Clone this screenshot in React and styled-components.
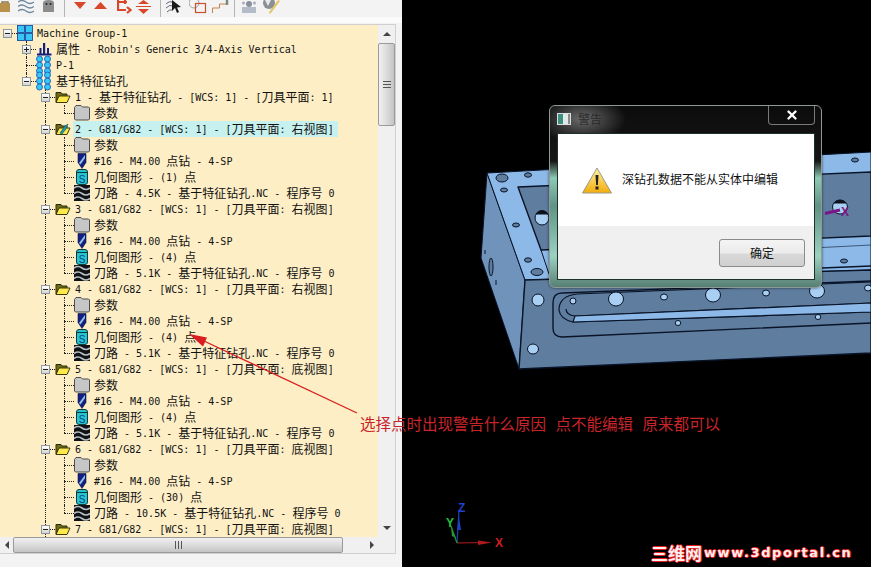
import React from 'react'
import styled, { createGlobalStyle } from 'styled-components'
import { X } from 'lucide-react'

const op = (n, name) => ({ d: 2, icon: 'open', box: 'minus', text: `${n} - G81/G82 - [WCS: 1] - [刀具平面: ${name}]` })

const children = (hole, len, nc = '基于特征钻孔') => ([
    { d: 3, icon: 'folder', text: '参数' },
    { d: 3, icon: 'tool', text: '#16 - M4.00 点钻 - 4-SP' },
    { d: 3, icon: 'geom', text: `几何图形 - (${hole}) 点` },
    { d: 3, icon: 'path', text: `刀路 - ${len}K - ${nc}.NC - 程序号 0` },
])

const rows = [
    { d: 0, icon: 'group', text: 'Machine Group-1', box: 'minus' },
    { d: 1, icon: 'chart', text: "属性 - Robin's Generic 3/4-Axis Vertical", box: 'plus' },
    { d: 1, icon: 'dots', text: 'P-1' },
    { d: 1, icon: 'dots', text: '基于特征钻孔', box: 'minus' },
    { d: 2, icon: 'open', text: '1 - 基于特征钻孔 - [WCS: 1] - [刀具平面: 1]', box: 'minus' },
    { d: 3, icon: 'folder', text: '参数' },
    { d: 2, icon: 'openCheck', text: '2 - G81/G82 - [WCS: 1] - [刀具平面: 右视图]', box: 'minus', hl: true },
    ...children(1, '4.5'),
    op(3, '右视图'),
    ...children(4, '5.1'),
    op(4, '右视图'),
    ...children(4, '5.1'),
    op(5, '底视图'),
    ...children(4, '5.1'),
    op(6, '底视图'),
    ...children(30, '10.5'),
    op(7, '底视图'),
]

// column 2 keeps running past the last visible row, the list is scrolled
const hasNext = (i, c) => {
    for (let j = i + 1; j < rows.length; j++) {
        if (rows[j].d < c) return false
        if (rows[j].d === c) return true
    }
    return c === 2
}

function Mixed({ text }) {
    return text.split(/([\u4e00-\u9fff]+)/).map((part, i) =>
        /[\u4e00-\u9fff]/.test(part)
            ? <Han key={i}>{part}</Han>
            : <Lat key={i}>{part}</Lat>
    )
}

const OpenFolder = ({ check }) => (
    <svg width="16" height="16" viewBox="0 0 16 16">
        <path d="M1 3.5h5l1 1.5h5v3H3.5L1 13z" fill="#6e6a1c" stroke="#2e2c08" />
        <path d="M1 13.5 4 7h11l-3 6.5z" fill="#ffe84a" stroke="#3a3a10" />
        {check && <path d="M5 12 10 5l3-2-2 5-4 5z" fill="#1f9aa8" stroke="#12506a" strokeWidth=".6" />}
    </svg>
)

const icons = {
    group: (
        <svg width="16" height="16" viewBox="0 0 16 16">
            {[[0.5, 0.5], [8.5, 0.5], [0.5, 8.5], [8.5, 8.5]].map(([x, y]) =>
                <rect key={x + '' + y} x={x} y={y} width="7" height="7" fill="#38c6f6" stroke="#1b4f9e" strokeWidth=".9" />
            )}
        </svg>
    ),
    chart: (
        <svg width="16" height="16" viewBox="0 0 16 16">
            <path d="M1 13.5h14.5" stroke="#14207e" strokeWidth="2" />
            <path d="M3.5 7h2v6h-2zM7 2h2.2v11H7zM11 7h2v6h-2z" fill="#14207e" />
        </svg>
    ),
    dots: (
        <svg width="16" height="16" viewBox="0 0 16 16" style={{ overflow: 'visible' }}>
            {[-0.5, 5.5, 11.5].map(y => [3.5, 11.5].map(x =>
                <circle key={x + '-' + y} cx={x} cy={y + 2.5} r="3" fill="#30ccf8" stroke="#1c48b4" strokeWidth=".8" />
            ))}
        </svg>
    ),
    open: <OpenFolder />,
    openCheck: <OpenFolder check />,
    folder: (
        <svg width="16" height="16" viewBox="0 0 16 16">
            <path d="M.5 2.5 2 .5h5l1.5 1.5h6l1 1v11l-1 1h-13l-1-1z" fill="#c6c6c6" stroke="#4d4d4d" />
        </svg>
    ),
    tool: (
        <svg width="16" height="16" viewBox="0 0 16 16">
            <path d="M4 .5h8v9L8 15.5 4 9.5z" fill="#14207e" stroke="#0a1050" strokeWidth=".6" />
            <path d="M5 10 11 2v3L6.5 11.5z" fill="#8fc2ee" />
        </svg>
    ),
    geom: (
        <svg width="16" height="16" viewBox="0 0 16 16">
            <rect x="2.5" y=".5" width="11" height="15" rx="2.5" fill="#26c4cc" stroke="#0b3a40" />
            <path d="M3 3.5h10" stroke="#0b3a40" />
            <text x="8" y="13.500" textAnchor="middle" fontSize="10" fontFamily="Liberation Sans" fill="#0a3c90">S</text>
        </svg>
    ),
    path: (
        <svg width="16" height="16" viewBox="0 0 16 16">
            <rect width="16" height="16" fill="#111" />
            <path d="M0 3q4-3 8 0t8 0M0 8.5q4-3 8 0t8 0M0 13.5q4-3 8 0t8 0" fill="none" stroke="#b6c0c8" strokeWidth="1.6" />
        </svg>
    ),
}

function TreeRow({ row, index }) {
    const cells = []
    for (let c = 0; c <= row.d; c++) {
        const next = hasNext(index, c)
        if (c === row.d) {
            cells.push(
                <Cell key={c} $up={c > 0} $down={next} $right>
                    {row.box && <Expander $plus={row.box === 'plus'} />}
                </Cell>
            )
        } else {
            cells.push(<Cell key={c} $up={next} $down={next} />)
        }
    }
    return (
        <Row>
            {cells}
            <NodeIcon>{icons[row.icon]}</NodeIcon>
            <Label $hl={row.hl}><Mixed text={row.text} /></Label>
        </Row>
    )
}

const Toolbar = () => (
    <Tools>
        <svg width="10" height="17" viewBox="0 0 10 17">
            <path d="M2 4V2h6v2" fill="none" stroke="#8a7a50" strokeWidth="1.5" />
            <rect y="3" width="10" height="9" fill="#b8924c" />
        </svg>
        <ToolGap $w={8} />
        <svg width="16" height="17" viewBox="0 0 16 17" fill="none" stroke="#6d86a0" strokeWidth="1.300">
            <path d="M0 2q4-3 8 0t8 0M0 6.500q4-3 8 0t8 0M0 11q4-3 8 0t8 0" />
        </svg>
        <ToolGap $w={9} />
        <svg width="11" height="17" viewBox="0 0 11 17">
            <path d="M0 12V3q0-3 5.500-3T11 3v9z" fill="#8d8d8d" />
            <circle cx="3.500" cy="4" r="1" fill="#222" />
            <circle cx="7.500" cy="4" r="1" fill="#222" />
        </svg>
        <ToolSep $l={10} $r={9} />
        <svg width="12" height="17" viewBox="0 0 12 17"><path d="M0 2h12L6 9z" fill="#d9472b" /></svg>
        <ToolGap $w={8} />
        <svg width="13" height="17" viewBox="0 0 13 17"><path d="M0 9h13L6.500 2z" fill="#d9472b" /></svg>
        <ToolGap $w={10} />
        <svg width="15" height="17" viewBox="0 0 15 17" fill="none" stroke="#d9472b" strokeWidth="2.200">
            <path d="M1 0v10h8M1 2h9" />
            <path d="M10 7l3.500 3-3.500 3M8 0v4" />
        </svg>
        <ToolGap $w={3} />
        <svg width="17" height="17" viewBox="0 0 17 17">
            <path d="M3 4h11L8.500 0zM3 9h11l-5.500 5z" fill="#d9472b" />
            <path d="M1 6.500h15" stroke="#d9472b" />
        </svg>
        <ToolSep $l={8} $r={5} />
        <svg width="16" height="17" viewBox="0 0 16 17">
            <path d="M0 4q4-4 8-1M0 8q4-4 7-2M1 12q3-3 5-2" fill="none" stroke="#667" />
            <path d="M6 0l9 7-4 .5L13 12l-2 1-2-5-3 3z" fill="#1a1a1a" />
        </svg>
        <ToolGap $w={7} />
        <svg width="19" height="17" viewBox="0 0 19 17" fill="none">
            <circle cx="5" cy="3" r="5" stroke="#9aa3a8" />
            <rect x="6.500" y="3.500" width="10" height="9" stroke="#c8502e" strokeWidth="1.200" />
        </svg>
        <ToolGap $w={4} />
        <svg width="18" height="17" viewBox="0 0 18 17" fill="none">
            <path d="M0.500 13V8h7V4h7" stroke="#c8824a" />
            <path d="M15 0v5" stroke="#7a8a80" strokeWidth="2.500" />
        </svg>
        <ToolSep $l={4} $r={6} />
        <svg width="16" height="17" viewBox="0 0 16 17">
            <path d="M1 13V7h14v6z" fill="#b3bcc8" />
            <circle cx="8" cy="4" r="3" fill="#8792a0" />
            <circle cx="2.500" cy="3" r="1.500" fill="#aab" />
            <circle cx="13.500" cy="3" r="1.500" fill="#aab" />
        </svg>
        <ToolGap $w={6} />
        <svg width="17" height="17" viewBox="0 0 17 17">
            <circle cx="6" cy="3" r="6" fill="#8b8f96" />
            <path d="M2 0h6l-3 6z" fill="#e8e8e8" />
            <path d="M15 0l2 1-9 12-2 1 .5-2.500z" fill="#e3c665" />
        </svg>
    </Tools>
)

const Model = () => (
    <ModelSvg viewBox="402 0 469 567">
        <g stroke="#0a1428" strokeWidth="1" strokeLinejoin="round">
            <path d="M487 173 525 280 519 369 481 258z" fill="#6f93bb" />
            <path d="M487 173 871 152V270L525 280z" fill="#8db9e8" />
            <path d="M525 280 871 270V353L519 369z" fill="#5f7d9e" strokeWidth="1.400" />
            <path d="M518 187 871 172V236L541 250z" fill="#5f7d9e" strokeWidth="1.400" />
            <path d="M541 250 549 274" fill="none" />
            <path d="M822 247.500 871 245" fill="none" strokeWidth=".6" />
            <path d="M822 268 871 266" fill="none" strokeWidth="1.400" />
            <path d="M871 281 562 293Q553 293 553 303V328Q553 337 562 337L871 323" fill="none" strokeWidth="1.400" />
            <path d="M871 282 577 294Q559 296 559 310 560 319 573 322L871 312V303L575 316Q566 315 566 309" fill="#5f7d9e" strokeWidth="1.200" />
            <path d="M575 316 871 303V312L573 322z" fill="#8db9e8" strokeWidth="1.200" />
            {[[502, 178, 6, 4], [528, 175, 3.5, 2.200], [504, 190, 3.500, 2], [516, 225, 3.500, 2], [528, 260, 3.500, 2.200], [537, 272, 6, 3.500], [855, 160, 3.500, 2], [844, 261, 3.500, 2]].map(([x, y, rx, ry]) =>
                <ellipse key={x + '-' + y} cx={x} cy={y} rx={rx} ry={ry} fill="#5f7d9e" />
            )}
            {[[538, 300, 6, 6], [533, 349, 5.500, 5], [573, 301, 3, 3], [616, 299, 7.500, 7], [664, 297, 3.500, 3], [713, 295, 7.500, 7], [766, 293, 3.500, 3], [817, 291, 7.500, 7], [868, 288, 3.500, 3], [678, 323, 2.800, 2.500], [818, 317, 2.800, 2.500], [542, 218, 7, 7], [840, 207, 7.500, 7]].map(([x, y, rx, ry]) =>
                <ellipse key={x + '-' + y} cx={x} cy={y} rx={rx} ry={ry} fill="#a9cff2" />
            )}
            <path d="M536 214a7 7 0 0 1 12 0z M834 203a7.500 7 0 0 1 12 0z" fill="#111" />
            <ellipse cx="491" cy="267" rx="2" ry="9" fill="#5f7d9e" />
            <path d="M485 250v4M496 280v5" fill="none" />
        </g>
        <path d="M825 213.500 840 210" stroke="#7a1686" strokeWidth="3" />
        <Axis x="841" y="216" fill="#7a1686">X</Axis>
        <path d="M457 543 488 542.500" stroke="#b01c1c" strokeWidth="1.200" />
        <path d="M478 540.500 492 542.500 478 545z" fill="#b01c1c" />
        <path d="M457 543 459 510" stroke="#1f3fc0" strokeWidth="1.200" />
        <path d="M459 516 461 530 457 530z" fill="#1f3fc0" />
        <path d="M457 543 451 526" stroke="#1f9a30" strokeWidth="1.200" />
        <path d="M451 527 456 538 452 536z" fill="#1f9a30" />
        <Axis x="495" y="547" fill="#d01c1c">X</Axis>
        <Axis x="458" y="512" fill="#2040d0">Z</Axis>
        <Axis x="446" y="527" fill="#20c040">Y</Axis>
    </ModelSvg>
)

function App() {
    return (
        <Page>
            <GlobalStyle />
            <Panel>
                <Toolbar />
                <TreeFrame>
                    <TreeList>
                        {rows.map((row, i) => <TreeRow key={i} row={row} index={i} />)}
                    </TreeList>
                    <VBar>
                        <Arrow $dir="up" />
                        <VThumb><Grip $v /></VThumb>
                        <VTrack />
                        <Arrow $dir="down" />
                    </VBar>
                    <HBar>
                        <Arrow $dir="left" />
                        <HThumb><Grip /></HThumb>
                        <HTrack />
                        <Arrow $dir="right" />
                    </HBar>
                    <Corner />
                </TreeFrame>
            </Panel>
            <Viewport>
                <Model />
                <Dialog>
                    <TitleBar>
                        <WinIcon />
                        <Title>警告</Title>
                        <CloseBtn><X size={14} strokeWidth={4} color="#fff" /></CloseBtn>
                    </TitleBar>
                    <Client>
                        <Body>
                            <svg width="30" height="27" viewBox="0 0 30 27">
                                <defs>
                                    <linearGradient id="warn" x1="0" y1="0" x2="0" y2="1">
                                        <stop offset="0" stopColor="#fff3a0" />
                                        <stop offset="1" stopColor="#f2ac0c" />
                                    </linearGradient>
                                </defs>
                                <path d="M15 1 29.500 26H.5z" fill="url(#warn)" stroke="#9a9a88" strokeLinejoin="round" />
                                <path d="M13.500 8h3l-.6 10h-1.800z" fill="#222" />
                                <rect x="13.500" y="19.500" width="3" height="3" fill="#222" />
                            </svg>
                            <Message>深钻孔数据不能从实体中编辑</Message>
                        </Body>
                        <Footer>
                            <OkButton>确定</OkButton>
                        </Footer>
                    </Client>
                </Dialog>
                <Watermark>三维网<WaterLatin>www.3dportal.cn</WaterLatin></Watermark>
            </Viewport>
            <CalloutArrow viewBox="0 0 871 567">
                <path d="M357 413 204 341" stroke="#d81e1e" strokeWidth="1.200" />
                <path d="M189 334 207 337.500 203 346.500z" fill="#d81e1e" />
            </CalloutArrow>
            <Callout>选择点时出现警告什么原因 点不能编辑 原来都可以</Callout>
        </Page>
    )
}

export default App

const GlobalStyle = createGlobalStyle`
    html, body {
        margin: 0;
        background: #000;
        overflow: hidden;
    }
`

const Page = styled.div`
    position: relative;
    width: 871px;
    height: 567px;
    display: flex;
    background: #000;
`

const Panel = styled.div`
    width: 402px;
    flex: none;
    display: flex;
    flex-direction: column;
    background: #f3f3f3;
`

const Tools = styled.div`
    height: 17px;
    flex: none;
    display: flex;
    overflow: hidden;
    margin-bottom: 7px;
    box-shadow: 0 1px 0 #fafafa, 0 6px 0 #fbfbfb;
    svg { flex: none; }
`

const ToolGap = styled.span`
    width: ${p => p.$w}px;
    flex: none;
`

const ToolSep = styled.span`
    width: 1px;
    flex: none;
    background: #b4b4b4;
    margin: 0 ${p => p.$r}px 0 ${p => p.$l}px;
`

const TreeFrame = styled.div`
    width: 396px;
    height: 530px;
    box-sizing: border-box;
    border: 1px solid #d0d0d0;
    border-left: 0;
    display: grid;
    grid-template-columns: 378px 1fr;
    grid-template-rows: 512px 1fr;
    background: #fdeec6;
`

const TreeList = styled.div`
    overflow: hidden;
    background: #fdeec6;
`

const Row = styled.div`
    height: 16px;
    margin-left: -2px;
    display: flex;
    align-items: center;
    white-space: nowrap;
`

const Cell = styled.span`
    position: relative;
    width: 19px;
    height: 16px;
    flex: none;
    display: flex;
    align-items: center;
    justify-content: center;

    &::before {
        content: "";
        display: ${p => (p.$up || p.$down) ? 'block' : 'none'};
        position: absolute;
        left: 9px;
        top: ${p => p.$up ? 0 : 8}px;
        bottom: ${p => p.$down ? 0 : 8}px;
        border-left: 1px dotted #222;
    }
    &::after {
        content: "";
        display: ${p => p.$right ? 'block' : 'none'};
        position: absolute;
        left: 9px;
        right: 0;
        top: 8px;
        border-top: 1px dotted #222;
    }
`

const Expander = styled.span`
    position: relative;
    z-index: 1;
    width: 7px;
    height: 7px;
    margin-left: 0;
    border: 1px solid #8b96a2;
    background: linear-gradient(#fff, #d6d6d0);

    &::before {
        content: "";
        position: absolute;
        left: 1px;
        right: 1px;
        top: 3px;
        height: 1px;
        background: #222;
    }
    &::after {
        content: "";
        display: ${p => p.$plus ? 'block' : 'none'};
        position: absolute;
        top: 1px;
        bottom: 1px;
        left: 3px;
        width: 1px;
        background: #222;
    }
`

const NodeIcon = styled.span`
    width: 16px;
    height: 16px;
    flex: none;
    margin-right: 2px;
    position: relative;
    z-index: 1;
    display: flex;
`

const Label = styled.span`
    height: 16px;
    line-height: 16px;
    padding: 0 4px 0 2px;
    color: #111;
    background: ${p => p.$hl ? '#c6f1ee' : 'transparent'};
`

const Lat = styled.span`
    font-family: "DejaVu Sans Mono", monospace;
    font-size: 10px;
    white-space: pre;
    position: relative;
    top: -1px;
`

const Han = styled.span`
    font-family: "Noto Sans CJK SC", sans-serif;
    font-size: 12px;
`

const VBar = styled.div`
    display: flex;
    flex-direction: column;
    align-items: stretch;
    background: #f0f0f0;
`

const HBar = styled.div`
    display: flex;
    background: #f0f0f0;
`

const Corner = styled.div`
    background: #f0f0f0;
`

const Arrow = styled.span`
    flex: none;
    ${p => (p.$dir === 'up' || p.$dir === 'down') ? 'height: 18px;' : 'width: 13px;'}
    display: flex;
    align-items: center;
    justify-content: center;

    &::before {
        content: "";
        width: 0;
        height: 0;
        ${p => p.$dir === 'up' && 'border: 4px solid transparent; border-top: 0; border-bottom: 4px solid #444;'}
        ${p => p.$dir === 'down' && 'border: 4px solid transparent; border-bottom: 0; border-top: 4px solid #444;'}
        ${p => p.$dir === 'left' && 'border: 4px solid transparent; border-left: 0; border-right: 4px solid #444;'}
        ${p => p.$dir === 'right' && 'border: 4px solid transparent; border-right: 0; border-left: 4px solid #444;'}
    }
`

const VThumb = styled.div`
    height: 83px;
    flex: none;
    box-sizing: border-box;
    border: 1px solid #9a9a9a;
    border-radius: 2px;
    background: linear-gradient(to right, #f0f0f0, #dcdcdc 50%, #c4c4c4);
    display: flex;
    align-items: center;
    justify-content: center;
`

const VTrack = styled.div`
    flex: 1;
`

const HThumb = styled.div`
    width: 330px;
    flex: none;
    box-sizing: border-box;
    border: 1px solid #9a9a9a;
    border-radius: 2px;
    background: linear-gradient(#f0f0f0, #dcdcdc 50%, #c4c4c4);
    display: flex;
    align-items: center;
    justify-content: center;
`

const HTrack = styled.div`
    flex: 1;
`

const Grip = styled.span`
    width: ${p => p.$v ? 8 : 7}px;
    height: ${p => p.$v ? 7 : 8}px;
    background: repeating-linear-gradient(
        ${p => p.$v ? 'to bottom' : 'to right'},
        #555 0 1px,
        transparent 1px 3px
    );
`

const Viewport = styled.div`
    position: relative;
    flex: 1;
    background: #000;
`

const ModelSvg = styled.svg`
    display: block;
    width: 469px;
    height: 567px;
`

const Axis = styled.text`
    font-family: "Liberation Sans", sans-serif;
    font-weight: 700;
    font-size: 12px;
`

const Dialog = styled.div`
    position: absolute;
    left: 147px;
    top: 105px;
    width: 273px;
    height: 183px;
    box-sizing: border-box;
    padding: 0 6px 7px 7px;
    display: flex;
    flex-direction: column;
    border: 1px solid #8f9a96;
    border-radius: 6px;
    background:
        radial-gradient(ellipse 44px 24px at 32px 13px, #6a6a6a, rgba(80, 80, 80, 0) 100%),
        linear-gradient(#0c0c0c 0, #161616 55px, #8ccab4 72px, #5f9384 100px, #9ad2c0 150px, #527a6e 183px);
    box-shadow: 0 0 3px rgba(0, 0, 0, 0.6);
`

const TitleBar = styled.div`
    height: 27px;
    flex: none;
    display: flex;
    align-items: flex-start;
`

const WinIcon = styled.span`
    width: 14px;
    height: 12px;
    margin-top: 7px;
    flex: none;
    background: linear-gradient(to right, #3f8f80 0 40%, #dfe9e6 40% 80%, #8a8a8a 80%);
    border: 1px solid #dcdcdc;
    box-sizing: border-box;
`

const Title = styled.span`
    margin-left: 7px;
    margin-top: 4px;
    font-family: "Noto Sans CJK SC", sans-serif;
    font-size: 12px;
    line-height: 18px;
    color: #2a2a2a;
`

const CloseBtn = styled.span`
    margin-left: auto;
    width: 47px;
    height: 19px;
    box-sizing: border-box;
    border: 1px solid #7a7a7a;
    border-top: 0;
    border-radius: 0 0 4px 4px;
    display: flex;
    align-items: center;
    justify-content: center;
`

const Client = styled.div`
    flex: 1;
    display: flex;
    flex-direction: column;
    border: 1px solid #1f2f2a;
    background: #fff;
`

const Body = styled.div`
    height: 92px;
    flex: none;
    box-sizing: border-box;
    padding: 33px 0 0 24px;
    display: flex;
    align-items: flex-start;
    gap: 10px;
    background: #fff;
`

const Message = styled.span`
    font-family: "Noto Sans CJK SC", sans-serif;
    font-size: 12px;
    line-height: 20px;
    margin-top: 2px;
    color: #111;
`

const Footer = styled.div`
    flex: 1;
    background: #f0f0f0;
    box-sizing: border-box;
    padding: 13px 9px 0 0;
    display: flex;
    justify-content: flex-end;
    align-items: flex-start;
`

const OkButton = styled.div`
    width: 86px;
    height: 28px;
    box-sizing: border-box;
    border: 1px solid #8a8a8a;
    border-radius: 3px;
    background: linear-gradient(#f4f4f4, #ebebeb 50%, #d8d8d8 55%, #cfcfcf);
    font-family: "Noto Sans CJK SC", sans-serif;
    font-size: 12px;
    line-height: 26px;
    text-align: center;
    color: #111;
`

const Watermark = styled.div`
    position: absolute;
    left: 249px;
    top: 544px;
    display: flex;
    align-items: center;
    font-family: "Noto Sans CJK SC", sans-serif;
    font-size: 17px;
    font-weight: 700;
    line-height: 18px;
    color: #ffeeee;
    text-shadow: 1px 0 0 #e02020, -1px 0 0 #e02020, 0 1px 0 #e02020, 0 -1px 0 #e02020;
`

const WaterLatin = styled.span`
    font-family: "DejaVu Sans", sans-serif;
    font-size: 13px;
    letter-spacing: 1.6px;
    margin-left: 2px;
`

const CalloutArrow = styled.svg`
    position: absolute;
    left: 0;
    top: 0;
    width: 871px;
    height: 567px;
    pointer-events: none;
`

const Callout = styled.div`
    position: absolute;
    left: 360px;
    top: 413px;
    font-family: "Noto Sans CJK SC", sans-serif;
    font-size: 15.500px;
    line-height: 20px;
    word-spacing: 6px;
    white-space: nowrap;
    color: #c8242a;
`
